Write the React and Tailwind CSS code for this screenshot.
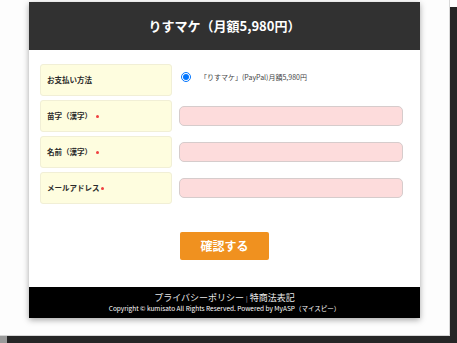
import React from 'react'

const rows = [
  { label: '苗字（漢字）', required: true },
  { label: '名前（漢字）', required: true },
  { label: 'メールアドレス', required: true, tight: true },
]

const Label = ({ children, required, tight }) => (
  <div className="h-[32px] flex items-center pl-[6px] bg-[#fefddf] border border-[#f1efd6] rounded-[3px] text-[7.5px] font-bold text-[#2a2a2a]">
    <span>{children}</span>
    {required && <span className={`${tight ? 'ml-[1px]' : 'ml-[4px]'} w-[3px] h-[3px] rounded-full bg-[#f04040]`} />}
  </div>
)

export default function App() {
  return (
    <div
      className="w-[457px] h-[343px] bg-white overflow-hidden grid grid-cols-[450px_7px] grid-rows-[336px_7px]"
      style={{ fontFamily: '"Noto Sans CJK JP", "Noto Sans", sans-serif' }}
    >
      {/* PAGE */}
      <div className="bg-[#fdfdfd] border-r border-b border-[#d8d8d8] pt-[2px] pl-[29px]">
        <div className="w-[391px] bg-white shadow-[0_2px_6px_rgba(0,0,0,0.35)]">
          <div className="h-[48px] bg-[#313131] flex items-center justify-center text-white text-[13px] font-bold">
            りすマケ（月額5,980円）
          </div>

          <div className="pt-[14px] pl-[11px] pr-[17px]">
            <div className="grid grid-cols-[132px_1fr] gap-x-[7px] gap-y-[4px]">
              <Label>お支払い方法</Label>
              <div className="flex items-center pl-[2px] -mt-[6px]">
                <input type="radio" defaultChecked className="w-[10px] h-[10px] m-0 accent-[#0075ff]" />
                <span className="ml-[9px] text-[7px] text-[#444]">「りすマケ」(PayPal)月額5,980円</span>
              </div>

              {rows.map((r) => (
                <React.Fragment key={r.label}>
                  <Label required={r.required} tight={r.tight}>{r.label}</Label>
                  <div className="flex items-center">
                    <input type="text" className="w-full h-[20px] bg-[#fddcdc] border border-[#d6cccc] rounded-[5px] outline-none" />
                  </div>
                </React.Fragment>
              ))}
            </div>
          </div>

          <div className="flex justify-center pt-[28px] pb-[27px]">
            <button className="w-[89px] h-[28px] bg-[#f0911f] rounded-[2px] text-white text-[12px] font-bold leading-none">
              確認する
            </button>
          </div>

          {/* FOOTER */}
          <div className="h-[31px] bg-black flex flex-col items-center justify-center leading-none">
            <div className="text-[9px] text-[#e8e8e8]">
              プライバシーポリシー <span className="text-[6px] text-[#cccccc]">|</span> 特商法表記
            </div>
            <div className="mt-[3px] text-[6.5px] text-white">
              Copyright © kumisato All Rights Reserved. Powered by MyASP（マイスピー）
            </div>
          </div>
        </div>
      </div>

      {/* FRAME SHADOW */}
      <div className="flex flex-col">
        <div className="h-[7px] bg-white" />
        <div className="flex-1 bg-[#262626]" />
      </div>
      <div className="flex">
        <div className="w-[7px] bg-[#9a9a9a]" />
        <div className="flex-1 bg-[#262626]" />
      </div>
      <div className="bg-[#262626]" />
    </div>
  )
}
